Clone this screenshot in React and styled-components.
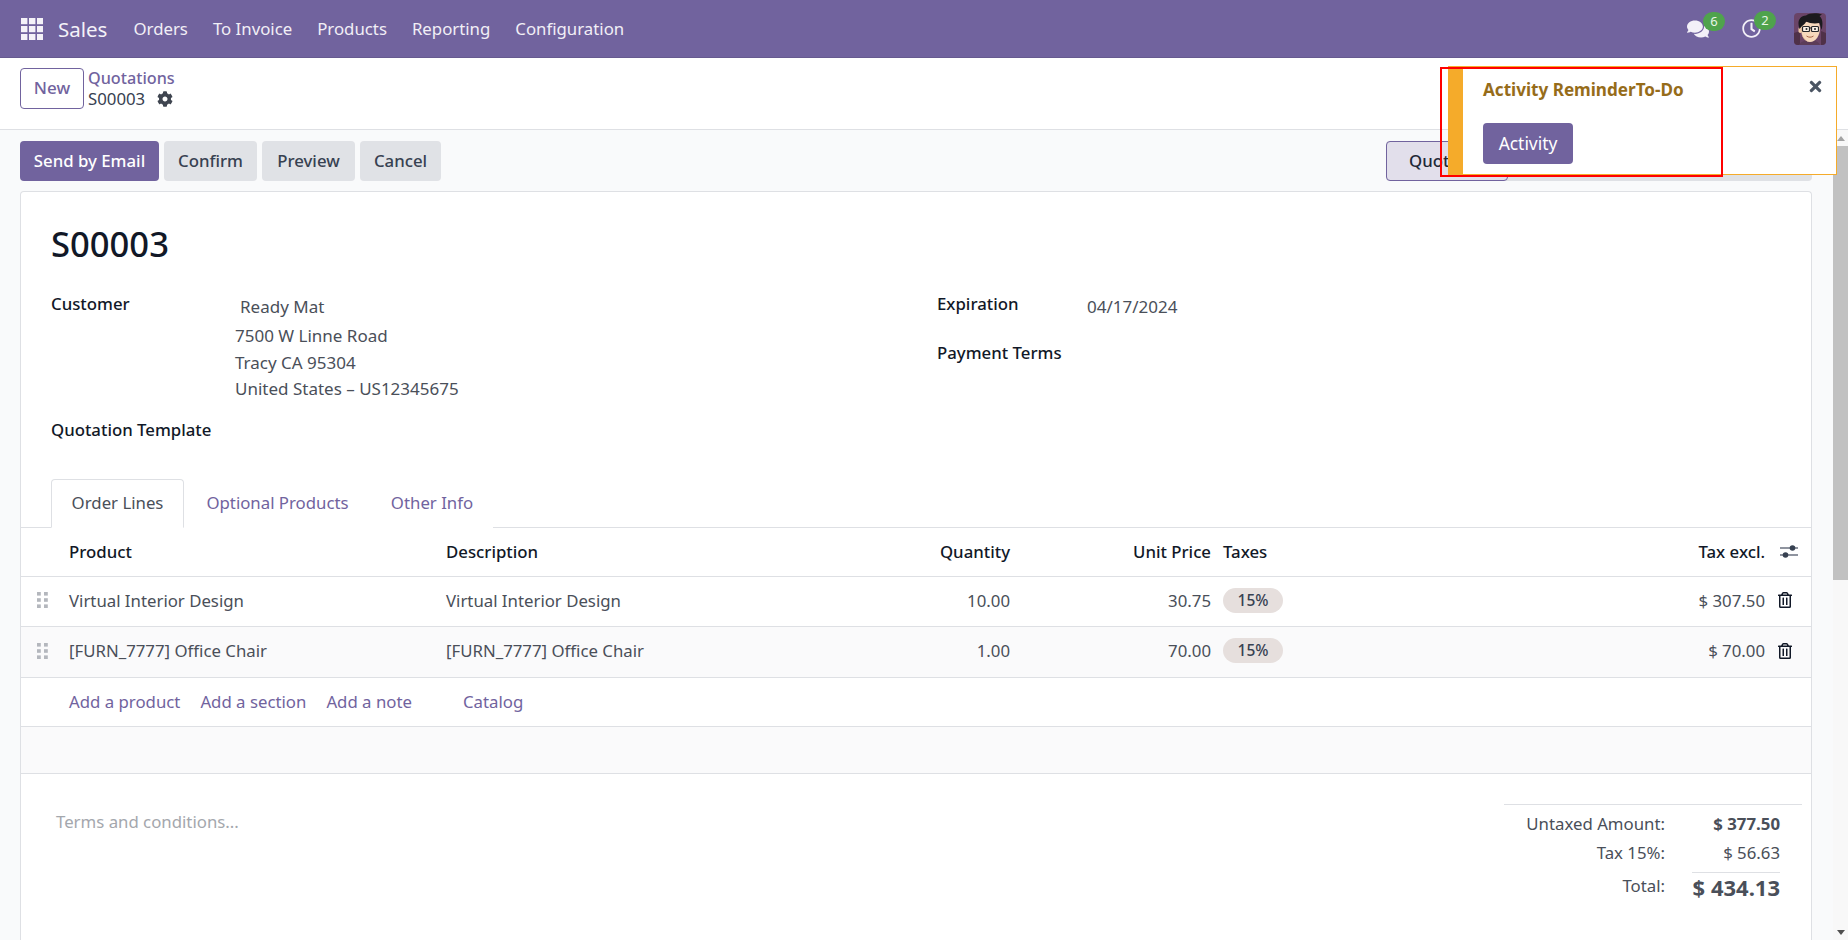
import React from "react";
import styled, { createGlobalStyle } from "styled-components";
import { FaComments, FaRegClock, FaCog, FaRegTrashAlt, FaTimes } from "react-icons/fa";

const GlobalStyle = createGlobalStyle`
  html, body {
    margin: 0;
    padding: 0;
    height: 100%;
    overflow: hidden;
    background: #fff;
    font-family: "Noto Sans", "Open Sans", sans-serif;
    font-size: 16.8px;
    color: #4a4f59;
  }
  * { box-sizing: border-box; }
`;

const Page = styled.div`
  position: relative;
  width: 1848px;
  height: 940px;
  display: flex;
  flex-direction: column;
  overflow: hidden;
`;

const NavBar = styled.header`
  height: 58px;
  flex: none;
  display: flex;
  align-items: center;
  background: #71639e;
  border-bottom: 1px solid #665a8f;
  color: #fff;
  padding: 0 22px 0 21px;
`;
const AppsIcon = styled.svg`
  width: 22px;
  height: 22px;
  margin-right: 15px;
`;
const Brand = styled.span`
  font-size: 20.5px;
  margin-right: 26px;
  color: #f4f2f8;
`;
const NavLink = styled.a`
  font-size: 16.8px;
  color: #f1eff6;
  margin-right: 25px;
`;
const NavRight = styled.div`
  margin-left: auto;
  display: flex;
  align-items: center;
`;
const NavIcon = styled.div`
  position: relative;
  display: flex;
  margin-right: ${(p) => p.$gap}px;
  font-size: ${(p) => p.$size}px;
  color: #f3f0f8;
`;
const Badge = styled.span`
  position: absolute;
  top: ${(p) => p.$top}px;
  left: ${(p) => p.$left}px;
  width: 22px;
  height: 19px;
  border-radius: 10px;
  background: #4fa34c;
  color: #e9f5e7;
  font-size: 13px;
  line-height: 19px;
  text-align: center;
`;
const Avatar = styled.svg`
  width: 32px;
  height: 32px;
  border-radius: 4px;
  display: block;
`;

const ControlTop = styled.div`
  height: 72px;
  flex: none;
  display: flex;
  align-items: flex-start;
  padding: 10px 0 0 20px;
  background: #fff;
  border-bottom: 1px solid #dee0e4;
`;
const NewButton = styled.button`
  width: 64px;
  height: 41px;
  background: #fff;
  border: 1px solid #71639e;
  border-radius: 4px;
  color: #71639e;
  font: 500 17px "Noto Sans", sans-serif;
  padding: 0 0 2px;
`;
const Breadcrumb = styled.div`
  margin-left: 4px;
  display: flex;
  flex-direction: column;
  font-size: 16.8px;
  line-height: 21px;
`;
const CrumbLink = styled.a`
  color: #71639e;
  font-size: 16.2px;
  font-weight: 500;
`;
const CrumbCurrent = styled.div`
  display: flex;
  align-items: center;
  gap: 12px;
  margin-top: -1px;
  color: #374151;
  svg { font-size: 16px; color: #3f4550; }
`;

const Content = styled.div`
  flex: 1;
  display: flex;
  min-height: 0;
`;
const Main = styled.main`
  flex: 1;
  min-width: 0;
  display: flex;
  flex-direction: column;
  background: #f9fafb;
  padding: 11px 21px 0 20px;
`;
const ActionBar = styled.div`
  height: 40px;
  flex: none;
  display: flex;
  gap: 5px;
  margin-bottom: 10px;
`;
const ActionButton = styled.button`
  height: 40px;
  padding: 0 0 2px;
  width: ${(p) => p.$w}px;
  border: 0;
  border-radius: 4px;
  background: ${(p) => (p.$primary ? "#71639e" : "#e0e2e6")};
  color: ${(p) => (p.$primary ? "#fff" : "#374151")};
  font: 500 16.8px "Noto Sans", sans-serif;
`;
const StatusBar = styled.div`
  margin-left: auto;
  display: flex;
  width: 426px;
  background: #dfe1e5;
  border-radius: 4px;
`;
const StatusStep = styled.div`
  width: ${(p) => p.$w}px;
  height: 40px;
  display: flex;
  align-items: center;
  padding: 0 0 2px 22px;
  font-size: 16.8px;
  font-weight: 500;
  color: #1f2937;
  border-radius: ${(p) => (p.$active ? "4px" : "0")};
  background: ${(p) => (p.$active ? "#e2dfeb" : "transparent")};
  border: ${(p) => (p.$active ? "1px solid #71639e" : "0")};
`;

const Sheet = styled.section`
  flex: 1;
  min-height: 0;
  background: #fff;
  border: 1px solid #dee0e4;
  border-bottom: 0;
  border-radius: 4px 4px 0 0;
  overflow: hidden;
`;
const Title = styled.h1`
  margin: 0;
  height: 88px;
  padding: 28px 0 0 30px;
  font-size: 34.6px;
  line-height: 48px;
  font-weight: 500;
  color: #111827;
`;
const FormGrid = styled.div`
  display: grid;
  grid-template-columns: 886px 1fr;
  padding-left: 30px;
  height: 199px;
`;
const Field = styled.div`
  display: flex;
  height: ${(p) => p.$h}px;
`;
const Label = styled.div`
  width: ${(p) => p.$w}px;
  flex: none;
  font-size: 16.8px;
  font-weight: 500;
  line-height: 24px;
  margin-top: 12px;
  color: #111827;
  white-space: nowrap;
`;
const Address = styled.div`
  margin-top: 14px;
  font-size: 17px;
`;
const AddressLine = styled.div`
  height: ${(p) => p.$h}px;
  line-height: 26px;
  padding-left: ${(p) => p.$indent || 0}px;
`;
const DateValue = styled.div`
  font-size: 17px;
  line-height: 26px;
  margin-top: 14px;
`;

const TabBar = styled.div`
  height: 49px;
  display: flex;
  padding-left: 30px;
  border-bottom: 1px solid #dee0e4;
`;
const Tab = styled.a`
  height: 49px;
  width: ${(p) => p.$w}px;
  display: flex;
  align-items: center;
  justify-content: center;
  padding-bottom: 2px;
  color: ${(p) => (p.$active ? "#4a4f59" : "#71639e")};
  background: #fff;
  ${(p) =>
    p.$active &&
    "border: 1px solid #dee0e4; border-bottom: 1px solid #fff; border-radius: 4px 4px 0 0;"}
`;

const Row = styled.div`
  display: grid;
  grid-template-columns: 48px 377px 354px 210px 201px 189px 365px 1fr;
  align-items: center;
  height: ${(p) => p.$h}px;
  padding-bottom: ${(p) => (p.$head ? 2 : 3)}px;
  background: ${(p) => p.$bg || "#fff"};
  border-bottom: 1px solid #dee0e4;
  font-weight: ${(p) => (p.$head ? 500 : 400)};
  color: ${(p) => (p.$head ? "#111827" : "#4a4f59")};
`;
const Cell = styled.div`
  text-align: ${(p) => (p.$right ? "right" : "left")};
  padding-left: ${(p) => p.$pad || 0}px;
  white-space: nowrap;
`;
const Handle = styled.svg`
  width: 11px;
  height: 16px;
  margin-left: 16px;
`;
const TaxTag = styled.span`
  display: inline-block;
  width: 60px;
  height: 25px;
  border-radius: 13px;
  background: #e6dfdd;
  color: #374151;
  font-size: 15.5px;
  font-weight: 500;
  line-height: 25px;
  text-align: center;
`;
const RowIcon = styled.div`
  display: flex;
  justify-content: flex-start;
  padding-left: ${(p) => p.$pad}px;
  font-size: 16px;
  color: #111827;
`;
const Sliders = styled.svg`
  width: 18px;
  height: 15px;
  display: block;
`;
const AddRow = styled.div`
  height: 49px;
  display: flex;
  align-items: center;
  padding: 0 0 2px 48px;
  border-bottom: 1px solid #dee0e4;
`;
const AddLink = styled.a`
  color: #71639e;
  margin-right: ${(p) => p.$gap}px;
`;
const EmptyRow = styled.div`
  height: 47px;
  background: #fafafb;
  border-bottom: 1px solid #dee0e4;
`;
const Bottom = styled.div`
  display: flex;
  justify-content: space-between;
  align-items: flex-start;
  padding: 30px 9px 0 35px;
`;
const Terms = styled.div`
  margin-top: 6px;
  color: #a4a7ad;
`;
const Totals = styled.div`
  width: 298px;
  border-top: 1px solid #dee0e4;
  padding: 4px 22px 0 0;
  display: grid;
  grid-template-columns: 161px 1fr;
  color: #4a4f59;
`;
const TotalLabel = styled.div`
  height: ${(p) => p.$h}px;
  line-height: ${(p) => p.$lh}px;
  text-align: right;
`;
const TotalValue = styled.div`
  height: ${(p) => p.$h}px;
  line-height: ${(p) => p.$lh}px;
  text-align: right;
  font-size: ${(p) => p.$size || 16.8}px;
  font-weight: ${(p) => p.$weight || 400};
  ${(p) => p.$rule && "border-top: 1px solid #dee0e4; margin-left: 27px;"}
`;

const ScrollTrack = styled.div`
  width: 15px;
  flex: none;
  display: flex;
  flex-direction: column;
  align-items: center;
  background: #f8f8f8;
`;
const ScrollArrow = styled.div`
  width: 0;
  height: 0;
  flex: none;
  margin: ${(p) => (p.$down ? "auto 0 5px" : "6px 0 5px")};
  border-left: 4px solid transparent;
  border-right: 4px solid transparent;
  ${(p) =>
    p.$down ? "border-top: 5px solid #505050;" : "border-bottom: 5px solid #a3a3a3;"}
`;
const ScrollThumb = styled.div`
  width: 15px;
  height: 434px;
  flex: none;
  background: #c1c1c1;
`;

const Toast = styled.div`
  position: absolute;
  left: 1448px;
  top: 66px;
  width: 389px;
  height: 109px;
  background: #fff;
  border: 1px solid #f5ab2a;
  border-left: 15px solid #f5ab2a;
  padding: 0 0 0 20px;
`;
const ToastTitle = styled.div`
  margin-top: 11px;
  height: 24px;
  line-height: 24px;
  font-size: 17.1px;
  font-weight: 700;
  color: #966c1a;
`;
const ToastButton = styled.button`
  display: block;
  margin-top: 21px;
  width: 90px;
  height: 41px;
  border: 0;
  border-radius: 4px;
  background: #71639e;
  color: #fff;
  font: 400 17.4px "Noto Sans", sans-serif;
  padding: 0 0 2px;
`;
const ToastClose = styled.div`
  position: absolute;
  right: 12px;
  top: 11px;
  display: flex;
  font-size: 17px;
  color: #4b5563;
`;
const RedMark = styled.div`
  position: absolute;
  left: 1440px;
  top: 67px;
  width: 283px;
  height: 110px;
  border: 2px solid #f00;
  pointer-events: none;
`;

const lines = [
  { product: "Virtual Interior Design", qty: "10.00", price: "30.75", total: "$ 307.50", h: 50 },
  { product: "[FURN_7777] Office Chair", qty: "1.00", price: "70.00", total: "$ 70.00", h: 51, bg: "#fafafb" },
];

function Apps() {
  const cells = [0, 8, 16];
  return (
    <AppsIcon viewBox="0 0 22 22">
      {cells.map((y) =>
        cells.map((x) => (
          <rect key={x + "-" + y} x={x} y={y} width="6.4" height="6.2" fill="#f4f2f8" />
        ))
      )}
    </AppsIcon>
  );
}

function Face() {
  return (
    <Avatar viewBox="0 0 32 32">
      <rect width="32" height="32" fill="#6a4467" />
      <path d="M0 32V20l6-2v14zM32 32V20l-5-2v14z" fill="#4f3148" />
      <path d="M5 32c1-3 6-5 11-5s9 2 10 5z" fill="#5c3c58" />
      <path d="M7 12c-1 9 3 17 9 17s10-7 10-14l-1-6H9z" fill="#f7d8bc" />
      <path d="M7.5 20c2 5 5 9 9 9-4 0-8-3-9-9z" fill="#e9bd9b" />
      <rect x="4.5" y="14" width="3.5" height="6" rx="1.7" fill="#efc6a4" />
      <path d="M5.5 16C3 9 5 3 12 2.5 15 0 23-.5 28 1.5l-2.5 1.6C29 6 29 12 27.5 17l-2-7c-5 1-10 .3-13.5-1.5C11.5 11 8.5 12 5.5 16z" fill="#1b1a1e" />
      <rect x="8.5" y="13.5" width="7" height="5" rx="1" fill="#fbf1e6" stroke="#26262a" strokeWidth="1.2" />
      <rect x="17.5" y="13.5" width="7" height="5" rx="1" fill="#fbf1e6" stroke="#26262a" strokeWidth="1.2" />
      <path d="M15.5 15h2" stroke="#26262a" strokeWidth="1" />
      <circle cx="12.5" cy="16" r="1" fill="#26262a" />
      <circle cx="21" cy="16" r="1" fill="#26262a" />
      <path d="M12.5 23c2 1.6 5 1.6 7 0" stroke="#a8674a" strokeWidth="1" fill="none" />
    </Avatar>
  );
}

function Dots() {
  const ys = [0, 6.2, 12.4];
  return (
    <Handle viewBox="0 0 11 16">
      {ys.map((y) => (
        <g key={y} fill="#b4b7bd">
          <rect x="0" y={y} width="3.8" height="3.6" />
          <rect x="7" y={y} width="3.8" height="3.6" />
        </g>
      ))}
    </Handle>
  );
}

export default function App() {
  return (
    <>
      <GlobalStyle />
      <Page>
        <NavBar>
          <Apps />
          <Brand>Sales</Brand>
          <NavLink>Orders</NavLink>
          <NavLink>To Invoice</NavLink>
          <NavLink>Products</NavLink>
          <NavLink>Reporting</NavLink>
          <NavLink>Configuration</NavLink>
          <NavRight>
            <NavIcon $size={22} $gap={33}>
              <FaComments />
              <Badge $left={16} $top={-6}>6</Badge>
            </NavIcon>
            <NavIcon $size={19} $gap={33}>
              <FaRegClock />
              <Badge $left={12} $top={-8}>2</Badge>
            </NavIcon>
            <Face />
          </NavRight>
        </NavBar>

        <ControlTop>
          <NewButton>New</NewButton>
          <Breadcrumb>
            <CrumbLink>Quotations</CrumbLink>
            <CrumbCurrent>
              S00003 <FaCog />
            </CrumbCurrent>
          </Breadcrumb>
        </ControlTop>

        <Content>
          <Main>
            <ActionBar>
              <ActionButton $primary $w={139}>Send by Email</ActionButton>
              <ActionButton $w={93}>Confirm</ActionButton>
              <ActionButton $w={93}>Preview</ActionButton>
              <ActionButton $w={81}>Cancel</ActionButton>
              <StatusBar>
                <StatusStep $active $w={122}>Quotation</StatusStep>
                <StatusStep $w={165}>Quotation Sent</StatusStep>
                <StatusStep $w={139}>Sales Order</StatusStep>
              </StatusBar>
            </ActionBar>

            <Sheet>
              <Title>S00003</Title>
              <FormGrid>
                <div>
                  <Field $h={126}>
                    <Label $w={184}>Customer</Label>
                    <Address>
                      <AddressLine $h={29} $indent={5}>Ready Mat</AddressLine>
                      <AddressLine $h={27}>7500 W Linne Road</AddressLine>
                      <AddressLine $h={26}>Tracy CA 95304</AddressLine>
                      <AddressLine $h={26}>United States – US12345675</AddressLine>
                    </Address>
                  </Field>
                  <Field $h={40}>
                    <Label $w={184}>Quotation Template</Label>
                  </Field>
                </div>
                <div>
                  <Field $h={49}>
                    <Label $w={150}>Expiration</Label>
                    <DateValue>04/17/2024</DateValue>
                  </Field>
                  <Field $h={40}>
                    <Label $w={150}>Payment Terms</Label>
                  </Field>
                </div>
              </FormGrid>

              <TabBar>
                <Tab $active $w={133}>Order Lines</Tab>
                <Tab $w={187}>Optional Products</Tab>
                <Tab $w={122}>Other Info</Tab>
              </TabBar>

              <Row $h={49} $head>
                <span />
                <Cell>Product</Cell>
                <Cell>Description</Cell>
                <Cell $right>Quantity</Cell>
                <Cell $right>Unit Price</Cell>
                <Cell $pad={12}>Taxes</Cell>
                <Cell $right>Tax excl.</Cell>
                <RowIcon $pad={15}>
                  <Sliders viewBox="0 0 18 15">
                    <path d="M0 4h18M0 11h18" stroke="#6b7280" strokeWidth="1.6" />
                    <circle cx="12.5" cy="4" r="2.8" fill="#374151" />
                    <circle cx="5.5" cy="11" r="2.8" fill="#374151" />
                  </Sliders>
                </RowIcon>
              </Row>

              {lines.map((line) => (
                <Row key={line.product} $h={line.h} $bg={line.bg}>
                  <Dots />
                  <Cell>{line.product}</Cell>
                  <Cell>{line.product}</Cell>
                  <Cell $right>{line.qty}</Cell>
                  <Cell $right>{line.price}</Cell>
                  <Cell $pad={12}>
                    <TaxTag>15%</TaxTag>
                  </Cell>
                  <Cell $right>{line.total}</Cell>
                  <RowIcon $pad={12}>
                    <FaRegTrashAlt />
                  </RowIcon>
                </Row>
              ))}

              <AddRow>
                <AddLink $gap={20}>Add a product</AddLink>
                <AddLink $gap={20}>Add a section</AddLink>
                <AddLink $gap={51}>Add a note</AddLink>
                <AddLink>Catalog</AddLink>
              </AddRow>
              <EmptyRow />

              <Bottom>
                <Terms>Terms and conditions...</Terms>
                <Totals>
                  <TotalLabel $h={29} $lh={29}>Untaxed Amount:</TotalLabel>
                  <TotalValue $h={29} $lh={29} $weight={700}>$ 377.50</TotalValue>
                  <TotalLabel $h={34} $lh={29}>Tax 15%:</TotalLabel>
                  <TotalValue $h={34} $lh={29}>$ 56.63</TotalValue>
                  <TotalLabel $h={28} $lh={28}>Total:</TotalLabel>
                  <TotalValue $h={28} $lh={28} $size={22} $weight={700} $rule>$ 434.13</TotalValue>
                </Totals>
              </Bottom>
            </Sheet>
          </Main>
          <ScrollTrack>
            <ScrollArrow />
            <ScrollThumb />
            <ScrollArrow $down />
          </ScrollTrack>
        </Content>

        <Toast>
          <ToastTitle>Activity ReminderTo-Do</ToastTitle>
          <ToastButton>Activity</ToastButton>
          <ToastClose>
            <FaTimes />
          </ToastClose>
        </Toast>
        <RedMark />
      </Page>
    </>
  );
}
